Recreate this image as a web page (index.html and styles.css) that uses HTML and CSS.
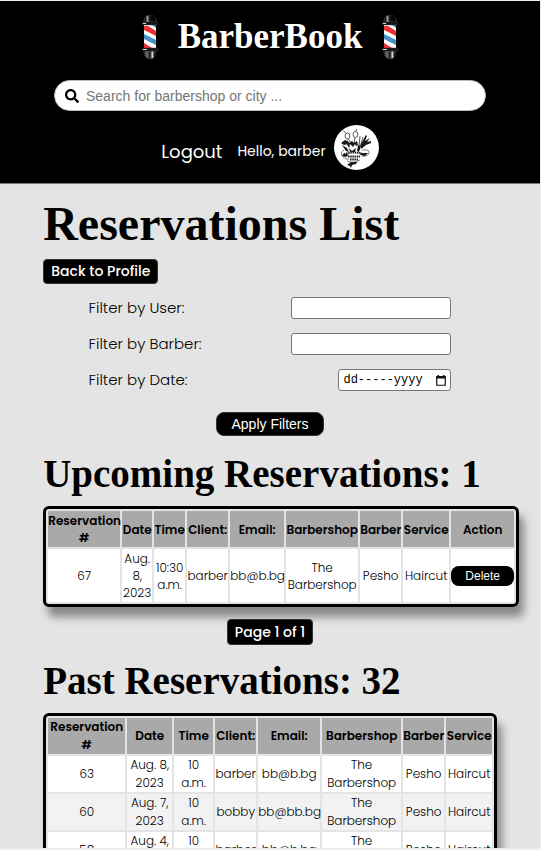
FILE: index.html
```html
<!DOCTYPE html>
<html lang="en">
<head>
<meta charset="utf-8">
<title>BarberBook</title>
<meta name="viewport" content="width=device-width, initial-scale=1">
<link rel="stylesheet" href="styles.css">
</head>
<body>
<svg class="defs" aria-hidden="true">
  <defs>
    <linearGradient id="knob" x1="0" x2="1" y1="0" y2="0">
      <stop offset="0" stop-color="#444"/><stop offset=".12" stop-color="#111"/><stop offset=".3" stop-color="#999"/><stop offset=".48" stop-color="#111"/><stop offset=".85" stop-color="#000"/><stop offset="1" stop-color="#333"/>
    </linearGradient>
    <linearGradient id="base" x1="0" x2="1" y1="0" y2="0">
      <stop offset="0" stop-color="#222"/><stop offset=".25" stop-color="#777"/><stop offset=".5" stop-color="#111"/><stop offset=".72" stop-color="#ddd"/><stop offset=".85" stop-color="#111"/><stop offset="1" stop-color="#333"/>
    </linearGradient>
    <clipPath id="tube"><rect x="2" y="10" width="12" height="25"/></clipPath>
    <symbol id="pole" viewBox="0 0 16 46">
      <path d="M2 9C1 4 4 1 8 1s7 3 6 8z" fill="url(#knob)" stroke="#333" stroke-width=".6"/>
      <path d="M2 37c0 5 2 8 6 8s6-3 6-8z" fill="url(#base)" stroke="#333" stroke-width=".6"/>
      <rect x="2" y="10" width="12" height="25" fill="#fff"/>
      <g clip-path="url(#tube)">
        <path d="M7 9h7v5z" fill="#4a90c8"/>
        <path d="M2 12l4 0 8 5v5L2 16z" fill="#ee3038"/>
        <path d="M2 20l12 6v5L2 25z" fill="#4a90c8"/>
        <path d="M2 29l10 6H2z" fill="#ee3038"/>
      </g>
      <rect x=".5" y="8" width="15" height="3" rx="1" fill="#111" stroke="#444" stroke-width=".5"/>
      <rect x=".5" y="34" width="15" height="3" rx="1" fill="#111" stroke="#444" stroke-width=".5"/>
      <path d="M1 9.500h3M1 35.500h4" stroke="#ddd"/>
    </symbol>
  </defs>
</svg>
<header class="site-header">
  <a class="brand" href="#">
    <svg class="pole" aria-hidden="true"><use href="#pole"/></svg>
    <span>BarberBook</span>
    <svg class="pole" aria-hidden="true"><use href="#pole"/></svg>
  </a>
  <form class="search">
    <svg class="search-icon" viewBox="0 0 512 512" aria-hidden="true"><path d="M505 442.700L405.300 343c-4.500-4.500-10.600-7-17-7H372c27.600-35.300 44-79.700 44-128C416 93.100 322.900 0 208 0S0 93.100 0 208s93.100 208 208 208c48.300 0 92.700-16.400 128-44v16.300c0 6.400 2.500 12.500 7 17l99.700 99.700c9.400 9.400 24.600 9.400 33.900 0l28.300-28.300c9.400-9.400 9.400-24.600.1-34zM208 336c-70.700 0-128-57.200-128-128 0-70.700 57.200-128 128-128 70.700 0 128 57.200 128 128 0 70.700-57.200 128-128 128z"/></svg>
    <input type="search" placeholder="Search for barbershop or city ..." aria-label="Search">
  </form>
  <nav class="user-nav">
    <a class="logout" href="#">Logout</a>
    <span class="hello">Hello, barber</span>
    <a class="avatar" href="#" aria-label="Profile">
      <svg viewBox="0 0 45 45" aria-hidden="true">
        <g fill="none" stroke="#333" stroke-width=".8">
          <ellipse cx="13.500" cy="11" rx="2.400" ry="3"/><ellipse cx="21.500" cy="9.500" rx="2.400" ry="3"/>
          <path d="M11.500 8l-2-2.500M22 6.500l.500-2.500M14.500 14l3 5M21 12.500l-1 6M10 17l6 5M26 11l-1 11M29 12l-3 10"/>
        </g>
        <g fill="#181818">
          <path d="M7 18l4-3 3 1 1 2 3-2 2 2 3-2 1 4-2 1-1-2-2 3-3-3-1 4-2-4-3 1zM27 19l5-9 1 1-2 5 5-3-3 4 4-1 0 2-5 2-5 4z"/>
          <path d="M8 20l5 3 2 4-3-1zM24 20l3 1-2 6-2-1zM15 23l3 3 4-3-1 4h-5zM10 28l5 2-3 2-4-1zM27 28l7 0-3 3-5-1zM13 40l4-3 6 0-1 2-4 1-1 3-1-2z"/>
        </g>
        <g fill="none" stroke="#222">
          <path d="M12 28.500q8-2 16 0M14 31.500h12M16 34.500h8" stroke-width="1.800" stroke-dasharray="1.600 .6"/>
          <path d="M10 25q-5 3-1 7 3 3 6 2M28 25q8-1 7 3-1 4-7 3M13 36q6 3 13-1" stroke-width=".6"/>
        </g>
      </svg>
    </a>
  </nav>
</header>
<main class="content">
  <h1>Reservations List</h1>
  <a class="back tag" href="#">Back to Profile</a>
  <form class="filters">
    <div class="field"><label for="user">Filter by User:</label><input id="user" type="text"></div>
    <div class="field"><label for="barber">Filter by Barber:</label><input id="barber" type="text"></div>
    <div class="field"><label for="date">Filter by Date:</label>
      <span class="date-box"><input id="date" type="text" placeholder="dd-----yyyy"><svg viewBox="0 0 10 11" aria-hidden="true"><path d="M.75 2.500h8.500v7.750H.75z" fill="none" stroke="#111" stroke-width="1.200"/><path d="M.2 1h9.600v2.500H.2zM1.500 0h1.500v1H1.500zM7 0h1.500v1H7z" fill="#111"/></svg></span>
    </div>
    <button class="apply" type="submit">Apply Filters</button>
  </form>

  <h2>Upcoming Reservations: 1</h2>
  <table class="upcoming">
    <colgroup><col class="w72"><col class="w30"><col class="w31"><col class="w41"><col class="w54"><col class="w72"><col class="w41"><col class="w46"><col class="w63"></colgroup>
    <thead><tr><th>Reservation #</th><th>Date</th><th>Time</th><th>Client:</th><th>Email:</th><th>Barbershop</th><th>Barber</th><th>Service</th><th>Action</th></tr></thead>
    <tbody><tr><td>67</td><td>Aug. 8, 2023</td><td>10:30 a.m.</td><td>barber</td><td>bb@b.bg</td><td>The Barbershop</td><td>Pesho</td><td>Haircut</td><td><button class="delete" type="button">Delete</button></td></tr></tbody>
  </table>
  <p class="pager"><span class="tag">Page 1 of 1</span></p>

  <h2>Past Reservations: 32</h2>
  <table class="past">
    <colgroup><col class="w77"><col class="w45"><col class="w39"><col class="w41"><col class="w62"><col class="w79"><col class="w41"><col class="w46"></colgroup>
    <thead><tr><th>Reservation #</th><th>Date</th><th>Time</th><th>Client:</th><th>Email:</th><th>Barbershop</th><th>Barber</th><th>Service</th></tr></thead>
    <tbody>
      <tr><td>63</td><td>Aug. 8, 2023</td><td>10 a.m.</td><td>barber</td><td>bb@b.bg</td><td>The Barbershop</td><td>Pesho</td><td>Haircut</td></tr>
      <tr><td>60</td><td>Aug. 7, 2023</td><td>10 a.m.</td><td>bobby</td><td>bb@bb.bg</td><td>The Barbershop</td><td>Pesho</td><td>Haircut</td></tr>
      <tr><td>58</td><td>Aug. 4, 2023</td><td>10 a.m.</td><td>barber</td><td>bb@b.bg</td><td>The Barbershop</td><td>Pesho</td><td>Haircut</td></tr>
    </tbody>
  </table>
</main>
</body>
</html>
```
FILE: styles.css
```css
* { box-sizing: border-box; }
html { height: 100%; overflow: hidden; }
body {
  height: 100%;
  margin: 0;
  overflow: hidden;
  border: solid #f0f0f0;
  border-width: 1px 1px 2px 0;
  background: #e4e4e4;
  color: #000;
  font-family: Poppins, Inter, "Open Sans", sans-serif;
  font-size: 14px;
}
.defs { position: absolute; width: 0; height: 0; }
a { color: inherit; text-decoration: none; }

.site-header {
  display: flex;
  flex-direction: column;
  align-items: center;
  padding: 12px 0 13px;
  background: #000;
  border-bottom: 1px solid #777;
  color: #fff;
}
.brand {
  display: flex;
  align-items: center;
  gap: 20px;
  height: 48px;
  font: bold 35px/48px "Liberation Serif", serif;
}
.pole { width: 16px; height: 46px; }
.search {
  display: flex;
  align-items: center;
  gap: 7px;
  width: 80%;
  height: 31px;
  margin-top: 19px;
  padding: 0 10px;
  border: 1px solid #bbb;
  border-radius: 16px;
  background: #fff;
}
.search-icon { width: 14px; height: 14px; }
.search input {
  flex: 1;
  min-width: 0;
  padding: 0;
  border: 0;
  outline: 0;
  background: none;
  font: 14px/20px "Liberation Sans", sans-serif;
}
.search input::placeholder { color: #757575; }
.user-nav { display: flex; align-items: center; margin-top: 14px; }
.logout { margin-right: 15px; padding-top: 8px; font-size: 18px; }
.hello { margin-right: 8px; padding-top: 8px; font-size: 14px; }
.avatar { width: 45px; height: 45px; border-radius: 50%; background: #fff; }
.avatar svg { display: block; }

.content { padding: 8px 8% 0; }
h1, h2 { margin: 0; font-family: "Liberation Serif", serif; white-space: nowrap; }
h1 { font-size: 48px; line-height: 64px; }
h2 { font-size: 39px; line-height: 46px; }
.tag {
  display: inline-block;
  padding: 0 7px;
  border: 1px solid #333;
  border-radius: 4px;
  background: #000;
  color: #fff;
  font-weight: 500;
  line-height: 24px;
}
.back { display: block; width: max-content; margin-top: 3px; line-height: 23px; }
.filters {
  display: flex;
  flex-direction: column;
  gap: 14px;
  width: 80%;
  margin: 13px auto 0;
  font-weight: 300;
}
.field { display: flex; align-items: center; justify-content: space-between; height: 22px; }
.field label { font-size: 15px; line-height: 20px; }
.field input, .date-box {
  width: 160px;
  height: 22px;
  border: 1px solid #777;
  border-radius: 3px;
  background: #fff;
}
.date-box { display: flex; align-items: center; width: 113px; padding: 0 4px; }
.date-box input {
  flex: 1;
  min-width: 0;
  height: 20px;
  padding: 0;
  border: 0;
  background: none;
  font: 12px/20px "Liberation Mono", monospace;
}
.date-box input::placeholder { color: #000; }
.date-box svg { width: 10px; height: 11px; }
.apply {
  align-self: center;
  width: 108px;
  height: 24px;
  margin-top: 7px;
  padding: 0;
  border: 1px solid #333;
  border-radius: 8px;
  background: #000;
  color: #fff;
  font: 14px/20px "Liberation Sans", sans-serif;
}
.filters + h2 { margin-top: 15px; }

table {
  table-layout: fixed;
  margin-top: 9px;
  border: 3px solid #000;
  border-radius: 6px;
  border-collapse: separate;
  border-spacing: 2px;
  box-shadow: 5px 10px 8px #888;
  font-size: 12px;
  line-height: 18px;
  text-align: center;
}
.upcoming { width: 476px; line-height: 17px; }
.past { width: 100%; }
th, td { padding: 0; }
.upcoming th, .upcoming td { padding: 1px 0; }
.past td:nth-child(3) { padding: 0 4px; }
th { background: #a9a9a9; font-size: 12px; font-weight: 600; }
td { background: #fff; font-weight: 300; }
tbody tr:nth-child(even) td { background: #f2f2f2; }
.w30 { width: 30px; }
.w31 { width: 31px; }
.w39 { width: 39px; }
.w41 { width: 41px; }
.w45 { width: 45px; }
.w46 { width: 46px; }
.w54 { width: 54px; }
.w62 { width: 62px; }
.w63 { width: 63px; }
.w72 { width: 72px; }
.w77 { width: 77px; }
.w79 { width: 79px; }
.delete {
  width: 100%;
  height: 20px;
  padding: 0;
  border: 0;
  border-radius: 8px;
  background: #000;
  color: #fff;
  font: 12px/20px "Liberation Sans", sans-serif;
}
.pager { margin: 12px 0 13px; text-align: center; }
```
